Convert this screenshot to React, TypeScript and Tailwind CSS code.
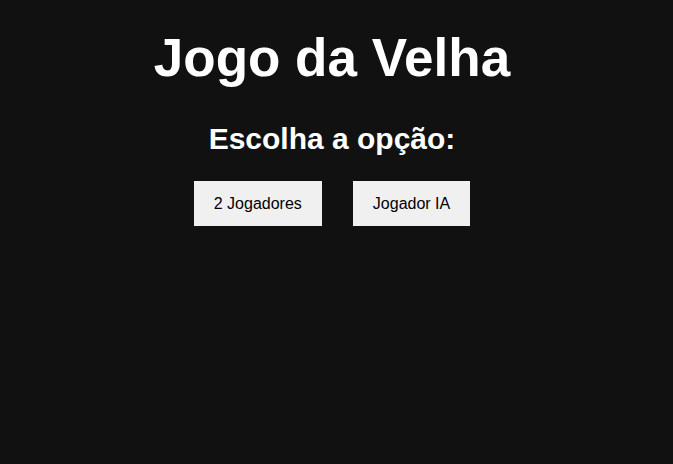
import React from 'react';

const App: React.FC = () => {
  return (
    <div className="min-h-screen w-full bg-[#111111] text-white flex flex-col items-center pr-[9px] font-['Liberation_Sans',Arial,sans-serif]">
      <h1 className="mt-[28px] text-[53px] font-bold leading-[60px]">Jogo da Velha</h1>
      <h2 className="mt-[33px] text-[30px] font-bold leading-[35px]">Escolha a opção:</h2>
      <div className="mt-[25px] flex gap-[31px]">
        <button className="h-[45px] px-5 bg-[#f0f0f0] text-black text-base leading-[19px]">2 Jogadores</button>
        <button className="h-[45px] px-5 bg-[#f0f0f0] text-black text-base leading-[19px]">Jogador IA</button>
      </div>
    </div>
  );
};

export default App;
